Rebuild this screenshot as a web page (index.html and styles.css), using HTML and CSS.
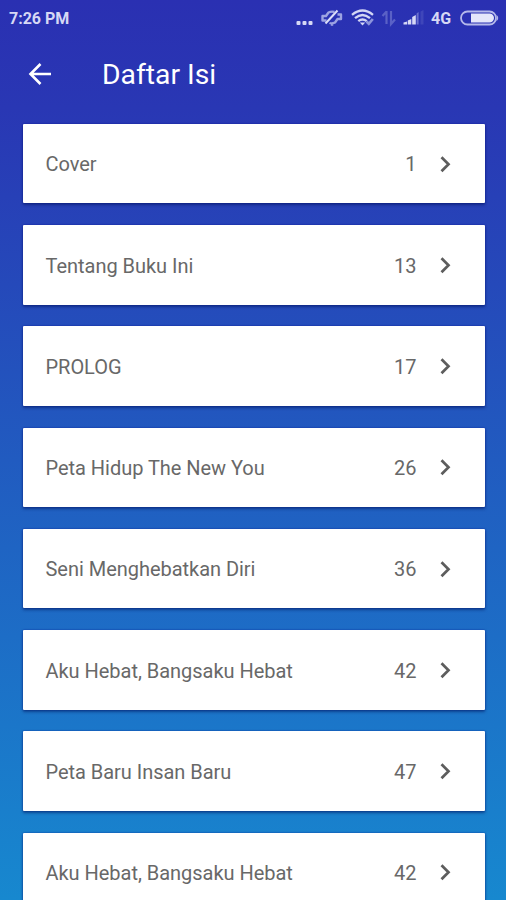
FILE: index.html
```html
<!DOCTYPE html>
<html lang="id">
<head>
<meta charset="utf-8">
<title>Daftar Isi</title>
<link rel="stylesheet" href="styles.css">
</head>
<body>
<svg class="defs" width="0" height="0"><symbol id="chevron" viewBox="0 0 12 18"><path d="M1.500 2.200l7 7-7 7" fill="none" stroke="#5d5d5d" stroke-width="2.700"/></symbol></svg>
<div class="status">
  <span class="time">7:26 PM</span>
  <svg class="indicators" width="134" height="24" viewBox="294 6 134 24" fill="none">
    <g fill="#d6d8f5"><rect x="297.500" y="21" width="4" height="4" rx="1"/><rect x="303.500" y="21" width="4" height="4" rx="1"/><rect x="309.500" y="21" width="4" height="4" rx="1"/></g>
    <g stroke="#9da3e2" stroke-width="2.400" stroke-linejoin="round"><path d="M327.500 20.500h-4v-4.500h3.500l2.500-3.500q3-1.500 6-.5M338.500 14.500h3.500v4.500h-3.500l-2.500 3.500q-3 1.500-5.500.5M333 24v1.800"/><path d="M326.500 23.500L338.500 10.500" stroke="#dcdef8" stroke-width="2"/></g>
    <g stroke="#d3d6f5" stroke-width="2.300"><path d="M353 14.800q10.500-8.500 21 0M356 18.200q7.500-6.500 15 0M359.300 21.200q4.200-3.500 8.400 0"/><path d="M360.800 22.500h5.400L363.500 25.500z" fill="#d3d6f5" stroke="none"/><path d="M367.500 21.500l2.300 2.300 4-4.800" stroke="#8d94dc" stroke-width="2.700"/></g>
    <g stroke="#5a61c6" stroke-width="2.200"><path d="M387.500 11v13M383.500 16l4-4.500M392 11v13l4-4.500"/></g>
    <g fill="#d6d8f5"><path d="M404.500 24.500v-2l3.600-1v3zM408.800 24.500v-4l3.500-1.500v5.500zM413.200 24.500v-7.500l3.600-2v9.500z"/><path fill="#6a70ce" d="M417.600 24.500v-11l2-1.500v12.500z"/><path fill="#3f46ba" d="M421.500 24.500v-13l3-1.500v14.500z"/></g>
  </svg>
  <span class="net">4G</span>
  <svg class="battery" width="39" height="16" viewBox="0 0 39 16"><rect x="1" y="1.500" width="35" height="13" rx="6.500" fill="none" stroke="#b4b8ea" stroke-width="1.800"/><path d="M36.800 5.500q2 2.500 0 5" fill="#b4b8ea" stroke="#b4b8ea"/><path d="M11 3.500h18.500a4.500 4.500 0 0 1 0 9H11z" fill="#e4e6fa"/></svg>
</div>
<header class="bar">
  <svg class="back" width="24" height="24" viewBox="0 0 24 24" fill="none" stroke="#fff" stroke-width="2.600"><path d="M24 11H4M13.500 1L3.500 11 13.500 21"/></svg>
  <h1>Daftar Isi</h1>
</header>
<main class="list">
  <div class="card"><span class="title">Cover</span><span class="page">1</span><svg class="go"><use href="#chevron"/></svg></div>
  <div class="card"><span class="title">Tentang Buku Ini</span><span class="page">13</span><svg class="go"><use href="#chevron"/></svg></div>
  <div class="card"><span class="title">PROLOG</span><span class="page">17</span><svg class="go"><use href="#chevron"/></svg></div>
  <div class="card"><span class="title">Peta Hidup The New You</span><span class="page">26</span><svg class="go"><use href="#chevron"/></svg></div>
  <div class="card"><span class="title">Seni Menghebatkan Diri</span><span class="page">36</span><svg class="go"><use href="#chevron"/></svg></div>
  <div class="card"><span class="title">Aku Hebat, Bangsaku Hebat</span><span class="page">42</span><svg class="go"><use href="#chevron"/></svg></div>
  <div class="card"><span class="title">Peta Baru Insan Baru</span><span class="page">47</span><svg class="go"><use href="#chevron"/></svg></div>
  <div class="card"><span class="title">Aku Hebat, Bangsaku Hebat</span><span class="page">42</span><svg class="go"><use href="#chevron"/></svg></div>
</main>
</body>
</html>
```

FILE: styles.css
```css
* { box-sizing: border-box; }
html, body { height: 100%; }
body {
  margin: 0;
  overflow: hidden;
  display: flex;
  flex-direction: column;
  font-family: Roboto, sans-serif;
  background: linear-gradient(#2a30b2 0%, #2937b4 12%, #1788cf 100%);
}
.defs { display: block; height: 0; flex: none; }
.status {
  flex: none;
  height: 36px;
  padding: 0 7px 0 9px;
  display: flex;
  align-items: center;
  color: #d6d8f5;
  font-size: 16px;
  font-weight: 700;
}
.time { margin-right: auto; }
.indicators { flex: none; }
.net { width: 21px; margin: 0 8px 0 4px; }
.battery { flex: none; }
.bar {
  flex: none;
  height: 87.75px;
  padding: 0 0 9px 27px;
  display: flex;
  align-items: center;
  color: #fff;
}
.bar h1 {
  margin: 0 0 0 51px;
  font-size: 28.3px;
  line-height: 34px;
  font-weight: 400;
}
.back { margin-top: -1px; }
.list {
  flex: none;
  padding: 0 21.5px 0 22.5px;
  display: flex;
  flex-direction: column;
  gap: 21.75px;
}
.card {
  height: 79.5px;
  padding: 1.5px 32.5px 0 23px;
  display: flex;
  align-items: center;
  background: #fff;
  border-radius: 1px;
  box-shadow: 0 2px 3px rgba(0, 20, 90, 0.5), 0 0 2px rgba(0, 10, 140, 0.6);
  color: #686868;
  font-size: 20px;
  letter-spacing: -0.03px;
}
.title { flex: 1; white-space: nowrap; }
.page { margin-right: 23.5px; }
.go { width: 12px; height: 18px; margin-top: -1.5px; }
```
